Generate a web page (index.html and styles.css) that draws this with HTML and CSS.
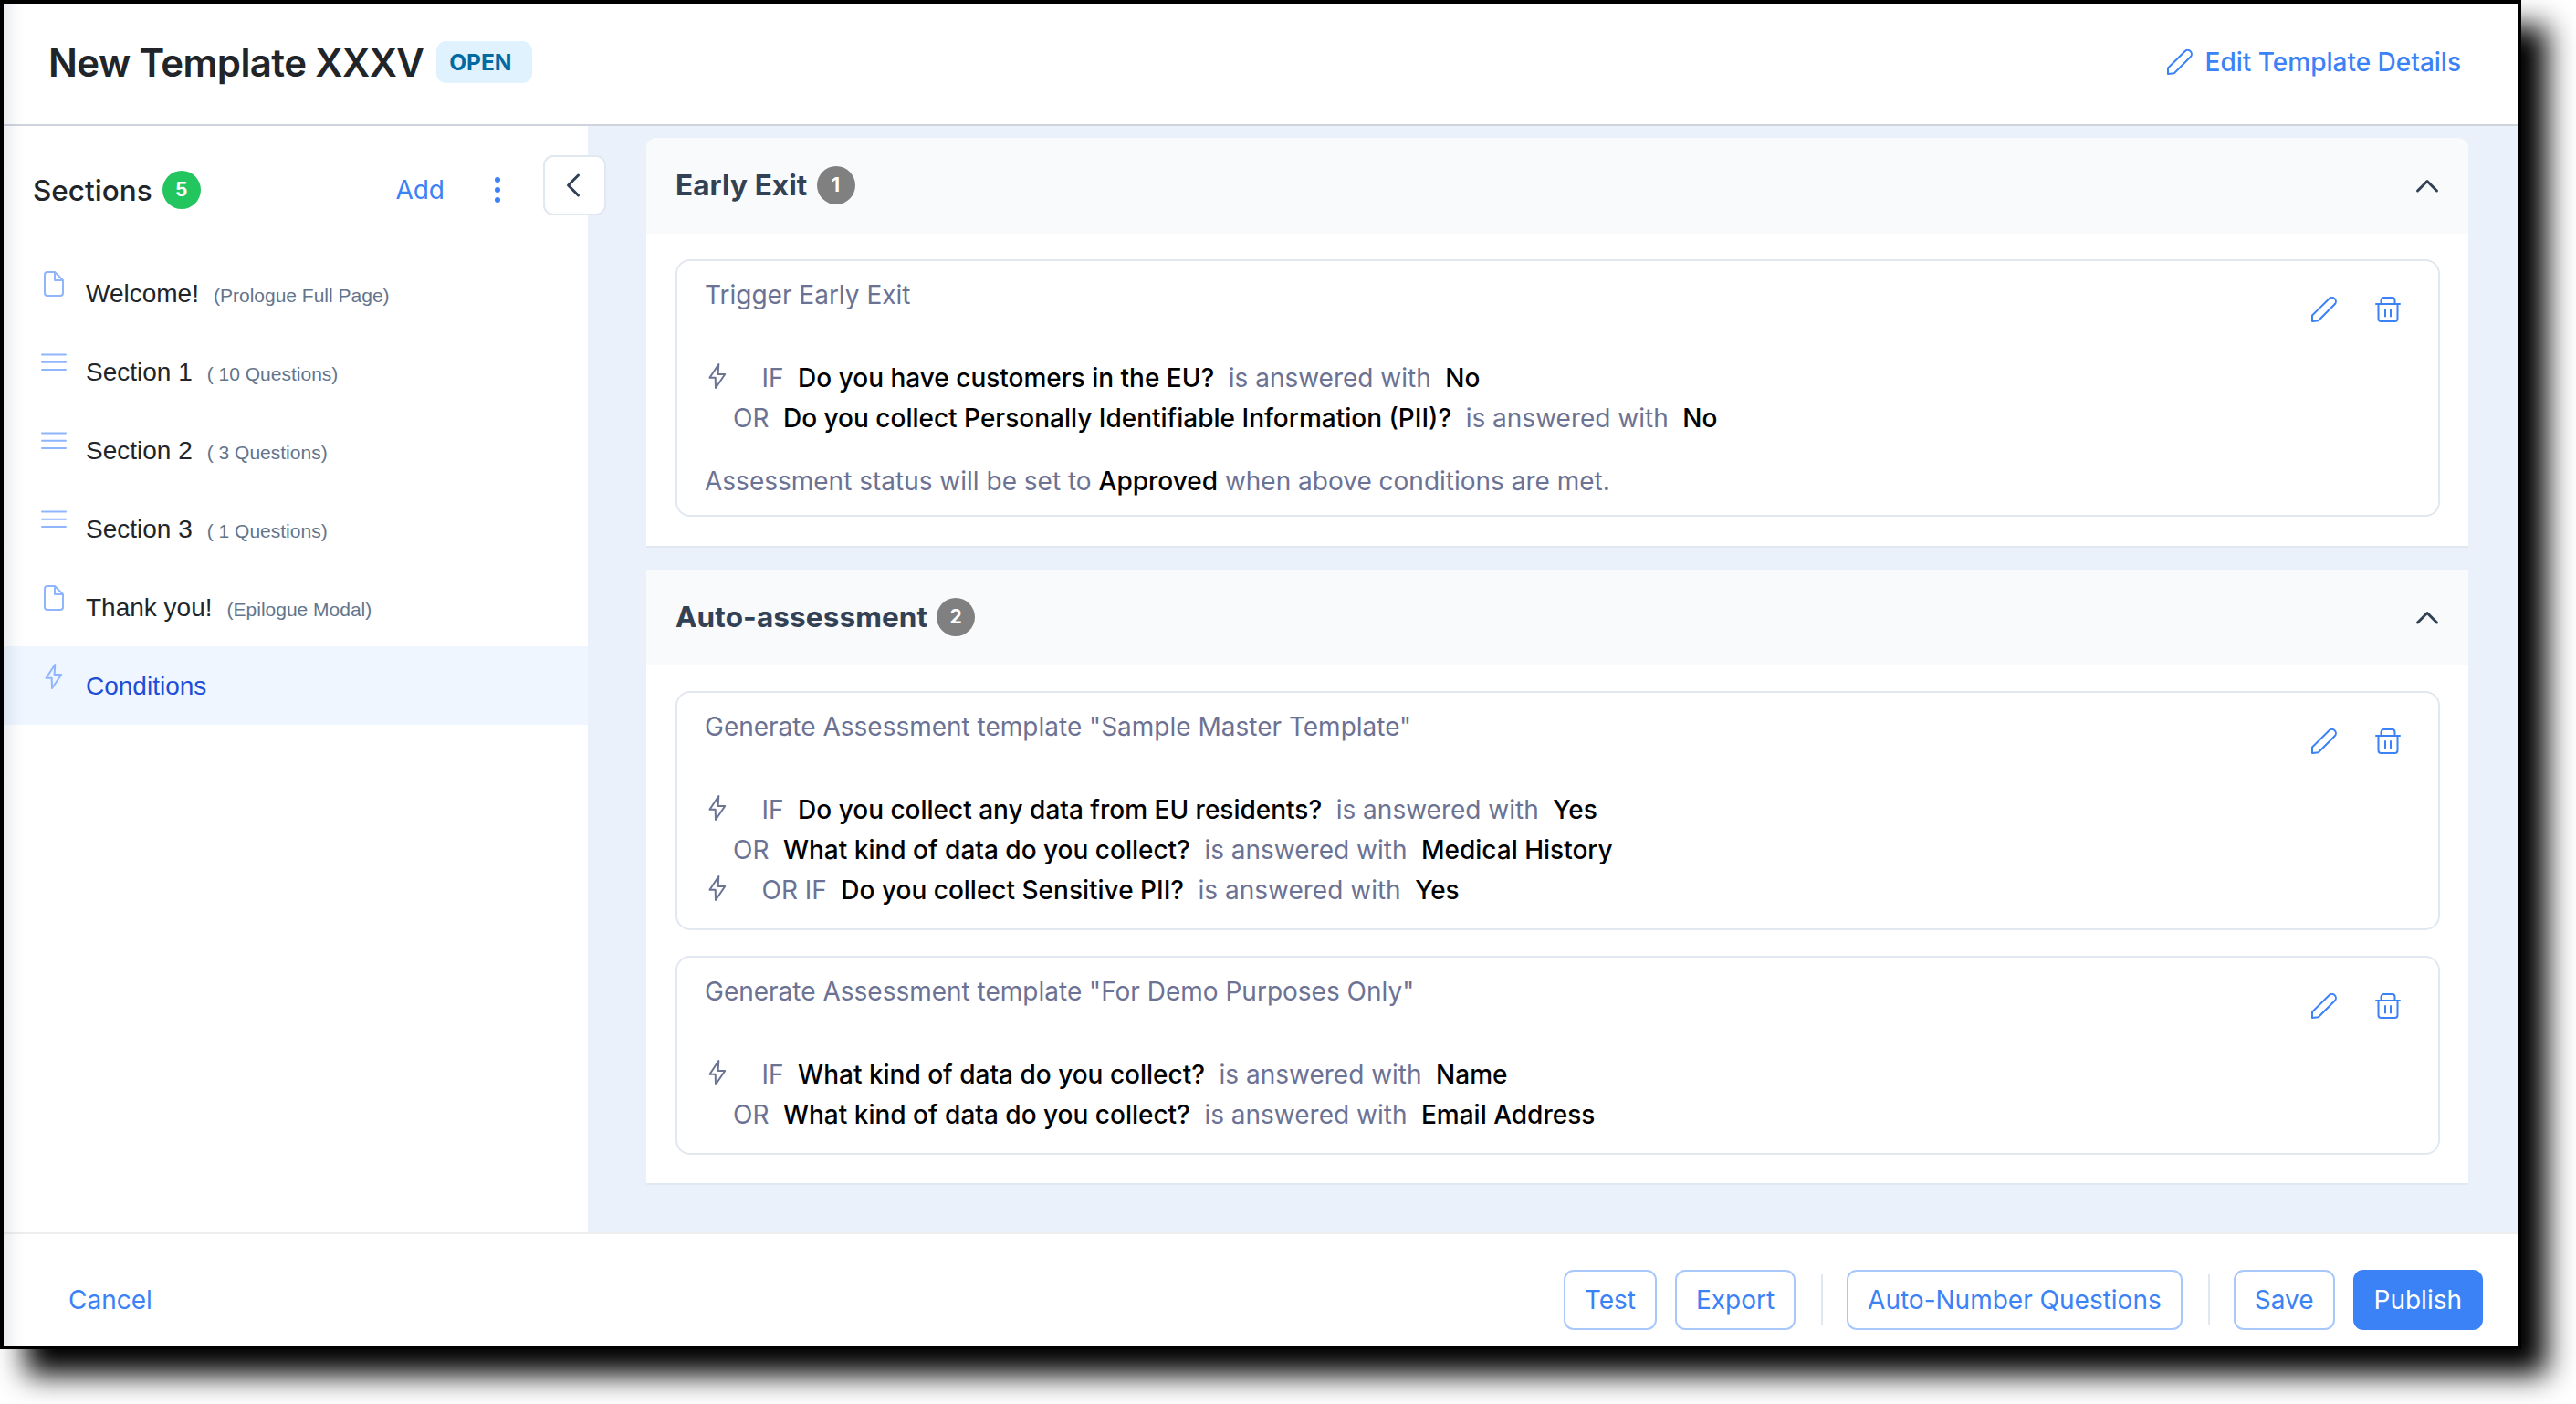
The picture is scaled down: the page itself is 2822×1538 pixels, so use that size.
FILE: index.html
```html
<!DOCTYPE html>
<html lang="en">
<head>
  <meta charset="UTF-8">
  <meta name="viewport" content="width=device-width, initial-scale=1.0">
  <title>New Template XXXV</title>
  <link rel="stylesheet" href="styles.css">
</head>
<body>

<!-- Icon set -->
<svg class="icon-defs" width="0" height="0">
  <symbol id="pencil" viewBox="0 0 28 28">
    <path d="M1 27V20.5L19.5 2.2a4.3 4.3 0 0 1 6.2 6L7.8 26.2Z"/>
  </symbol>
  <symbol id="trash" viewBox="0 0 28 28">
    <path d="M1 8h26M3.500 8V24a3 3 0 0 0 3 3h15a3 3 0 0 0 3-3V8M6.500 8V4a3 3 0 0 1 3-3h9a3 3 0 0 1 3 3v4M11 14v7.500M17 14v7.500"/>
  </symbol>
  <symbol id="bolt" viewBox="0 0 28 28">
    <path d="M15.3 1L5.500 15.700h6.200L12 27L22.200 12h-7.600Z"/>
  </symbol>
  <symbol id="file" viewBox="0 0 28 28">
    <path d="M15 1H7a3 3 0 0 0-3 3v20a3 3 0 0 0 3 3h14a3 3 0 0 0 3-3V10ZM15 1v9h9"/>
  </symbol>
  <symbol id="bars" viewBox="0 0 28 28">
    <path d="M1 5.5h26M1 13.7h26M1 22h26"/>
  </symbol>
  <symbol id="chevron-up" viewBox="0 0 28 28">
    <path d="M3.5 20L14 9.5L24.5 20"/>
  </symbol>
  <symbol id="chevron-left" viewBox="0 0 28 28">
    <path d="M19.5 3L8.5 14L19.5 25"/>
  </symbol>
</svg>

<div class="window">

  <!-- Header -->
  <header class="header">
    <h1>New Template XXXV</h1>
    <span class="status">OPEN</span>
    <a class="edit-link"><svg class="icon"><use href="#pencil"/></svg>Edit Template Details</a>
  </header>

  <div class="content">

    <!-- Sidebar -->
    <aside class="sidebar">
      <div class="sidebar-head">
        <h2>Sections</h2>
        <span class="count green">5</span>
        <a class="add">Add</a>
        <span class="dots"><i></i><i></i><i></i></span>
      </div>
      <button class="collapse"><svg class="icon"><use href="#chevron-left"/></svg></button>
      <ul class="section-list">
        <li><svg class="icon"><use href="#file"/></svg><span>Welcome!</span><small>(Prologue Full Page)</small></li>
        <li><svg class="icon"><use href="#bars"/></svg><span>Section 1</span><small>( 10 Questions)</small></li>
        <li><svg class="icon"><use href="#bars"/></svg><span>Section 2</span><small>( 3 Questions)</small></li>
        <li><svg class="icon"><use href="#bars"/></svg><span>Section 3</span><small>( 1 Questions)</small></li>
        <li><svg class="icon"><use href="#file"/></svg><span>Thank you!</span><small>(Epilogue Modal)</small></li>
        <li class="active"><svg class="icon"><use href="#bolt"/></svg><span>Conditions</span></li>
      </ul>
    </aside>

    <!-- Conditions -->
    <main class="main">
      <section class="panel first">
        <div class="panel-head">
          <h3>Early Exit</h3>
          <span class="count">1</span>
          <svg class="icon toggle"><use href="#chevron-up"/></svg>
        </div>
        <div class="panel-body">
          <div class="card with-note">
            <div class="actions">
              <svg class="icon"><use href="#pencil"/></svg>
              <svg class="icon"><use href="#trash"/></svg>
            </div>
            <p class="card-title">Trigger Early Exit</p>
            <div class="rule if"><svg class="icon"><use href="#bolt"/></svg><span>IF</span><b>Do you have customers in the EU?</b><span>is answered with</span><b>No</b></div>
            <div class="rule or"><span>OR</span><b>Do you collect Personally Identifiable Information (PII)?</b><span>is answered with</span><b>No</b></div>
            <p class="card-note">Assessment status will be set to <b>Approved</b> when above conditions are met.</p>
          </div>
        </div>
      </section>

      <section class="panel">
        <div class="panel-head">
          <h3>Auto-assessment</h3>
          <span class="count">2</span>
          <svg class="icon toggle"><use href="#chevron-up"/></svg>
        </div>
        <div class="panel-body">
          <div class="card">
            <div class="actions">
              <svg class="icon"><use href="#pencil"/></svg>
              <svg class="icon"><use href="#trash"/></svg>
            </div>
            <p class="card-title">Generate Assessment template "Sample Master Template"</p>
            <div class="rule if"><svg class="icon"><use href="#bolt"/></svg><span>IF</span><b>Do you collect any data from EU residents?</b><span>is answered with</span><b>Yes</b></div>
            <div class="rule or"><span>OR</span><b>What kind of data do you collect?</b><span>is answered with</span><b>Medical History</b></div>
            <div class="rule if"><svg class="icon"><use href="#bolt"/></svg><span>OR IF</span><b>Do you collect Sensitive PII?</b><span>is answered with</span><b>Yes</b></div>
          </div>
          <div class="card">
            <div class="actions">
              <svg class="icon"><use href="#pencil"/></svg>
              <svg class="icon"><use href="#trash"/></svg>
            </div>
            <p class="card-title">Generate Assessment template "For Demo Purposes Only"</p>
            <div class="rule if"><svg class="icon"><use href="#bolt"/></svg><span>IF</span><b>What kind of data do you collect?</b><span>is answered with</span><b>Name</b></div>
            <div class="rule or"><span>OR</span><b>What kind of data do you collect?</b><span>is answered with</span><b>Email Address</b></div>
          </div>
        </div>
      </section>
    </main>
  </div>

  <!-- Footer -->
  <footer class="footer">
    <a class="cancel">Cancel</a>
    <button class="btn">Test</button>
    <button class="btn">Export</button>
    <span class="divider"></span>
    <button class="btn">Auto-Number Questions</button>
    <span class="divider"></span>
    <button class="btn">Save</button>
    <button class="btn primary">Publish</button>
  </footer>
</div>

</body>
</html>
```

FILE: styles.css
```css
* {
  box-sizing: border-box;
}

body {
  margin: 0;
  height: 1538px;
  background-color: #fff;
  font-family: Inter, sans-serif;
  font-size: 28px;
  color: #212529;
  overflow: hidden;
}

h1, h2, h3, p, ul {
  margin: 0;
  padding: 0;
}

button {
  font: inherit;
}

.icon-defs {
  position: absolute;
}

.icon {
  width: 28px;
  height: 28px;
  flex: none;
  fill: none;
  stroke: currentColor;
  stroke-width: 2;
  stroke-linecap: round;
  stroke-linejoin: round;
  overflow: visible;
}

.window {
  position: relative;
  width: 2762px;
  height: 1478px;
  border: 4px solid #000;
  box-shadow: 28px 28px 30px #000;
  display: flex;
  flex-direction: column;
  background-color: #fff;
}

/* soft shade along the left edge */
.window::before {
  content: '';
  position: absolute;
  top: 0;
  left: 0;
  bottom: 0;
  width: 24px;
  background: linear-gradient(to right, rgba(30, 50, 90, 0.09), rgba(30, 50, 90, 0.02) 60%, transparent);
  z-index: 2;
}

/* Header */
.header {
  height: 134px;
  border-bottom: 2px solid #cfd4dc;
  padding: 0 62px 4px 49px;
  display: flex;
  align-items: center;
}

.header h1 {
  font-size: 42px;
  font-weight: 600;
  letter-spacing: -0.6px;
  margin-right: 14px;
}

.status {
  height: 46px;
  line-height: 46px;
  padding: 0 22px 0 14px;
  border-radius: 11px;
  background-color: #e0f2fe;
  color: #0369a1;
  font-size: 24.5px;
  font-weight: 700;
}

.edit-link {
  display: flex;
  align-items: center;
  gap: 14px;
  margin-left: auto;
  color: #3b82f6;
  font-weight: 500;
}

.content {
  flex: 1;
  display: flex;
  background-color: #eaf1fa;
}

/* Sidebar */
.sidebar {
  position: relative;
  width: 640px;
  background-color: #fff;
}

.sidebar-head {
  display: flex;
  align-items: center;
  height: 140px;
  padding-left: 32px;
}

.sidebar-head h2 {
  font-size: 31.5px;
  font-weight: 500;
  margin-right: 11px;
}

.count {
  width: 42px;
  height: 42px;
  line-height: 42px;
  border-radius: 50%;
  background-color: #808080;
  color: #fff;
  font-size: 21px;
  font-weight: 700;
  text-align: center;
}

.count.green {
  background-color: #22c55e;
}

.add {
  margin-left: auto;
  margin-right: 55px;
  color: #3b82f6;
}

.dots {
  display: flex;
  flex-direction: column;
  gap: 5px;
  margin-right: 96px;
}

.dots i {
  width: 6px;
  height: 6px;
  border-radius: 50%;
  background-color: #3b82f6;
}

.collapse {
  position: absolute;
  top: 32px;
  right: -20px;
  width: 69px;
  height: 66px;
  padding: 0 3px 0 0;
  display: flex;
  align-items: center;
  justify-content: center;
  border: 2px solid #e2e8f0;
  border-radius: 11px;
  background-color: #fff;
  color: #334155;
}

.collapse .icon, .toggle {
  stroke-width: 3;
}

.section-list {
  list-style: none;
}

.section-list li {
  display: flex;
  align-items: baseline;
  height: 86px;
  padding: 19px 0 0 41px;
  line-height: 50px;
  font-family: "Liberation Sans", Arial, sans-serif;
}

.section-list .icon {
  align-self: flex-start;
  margin-right: 21px;
  color: #8fb5fd;
}

.section-list small {
  margin-left: 16px;
  font-size: 21px;
  color: #64748b;
}

.section-list .active {
  background-color: #eff6ff;
  color: #1d4ed8;
}

/* Condition panels */
.main {
  flex: 1;
  padding: 13px 54px 0 64px;
}

.panel {
  margin-bottom: 24px;
  border-bottom: 2px solid #e2e8f0;
  background-color: #fff;
}

.panel-head {
  display: flex;
  align-items: center;
  height: 105px;
  padding: 0 31px 1px 32px;
  background-color: #f8fafc;
  color: #334155;
}

.panel.first, .first .panel-head {
  border-radius: 12px 12px 0 0;
}

.panel-head h3 {
  padding-bottom: 2px;
  font-size: 31.5px;
  font-weight: 700;
  letter-spacing: 0.1px;
  margin-right: 10px;
}

.toggle {
  margin-left: auto;
}

.panel-body {
  padding: 28px 31px 31px 32px;
}

.first .panel-body {
  padding-bottom: 32px;
}

.card {
  position: relative;
  padding: 15px 30px 20px;
  border: 2px solid #e2e8f0;
  border-radius: 16px;
  color: #6c7293;
  line-height: 44px;
}

.card.with-note {
  padding-bottom: 15px;
}

.card + .card {
  margin-top: 28px;
}

.card b {
  font-weight: 500;
  color: #000;
}

.card-title {
  margin-bottom: 47px;
}

.card-note {
  margin-top: 25px;
}

.actions {
  position: absolute;
  top: 39px;
  right: 41px;
  display: flex;
  gap: 42px;
  color: #3b82f6;
}

.rule {
  display: flex;
  gap: 15.5px;
  height: 44px;
}

.rule.or {
  padding-left: 31px;
}

.rule .icon {
  margin: 6px 19px 0 0;
}

/* Footer */
.footer {
  display: flex;
  align-items: center;
  height: 124px;
  padding: 22px 38px 0 71px;
  border-top: 2px solid #eee;
}

.cancel {
  margin-right: auto;
  color: #3b82f6;
}

.btn {
  height: 66px;
  padding: 0 21px;
  margin-left: 20px;
  border: 2px solid #a8c7fb;
  border-radius: 11px;
  background-color: #fff;
  color: #3b82f6;
}

.btn.primary {
  border-color: #3b82f6;
  background-color: #3b82f6;
  color: #fff;
}

.divider {
  width: 2px;
  height: 56px;
  margin: 0 6px 0 28px;
  background-color: #e2e8f0;
}
```
